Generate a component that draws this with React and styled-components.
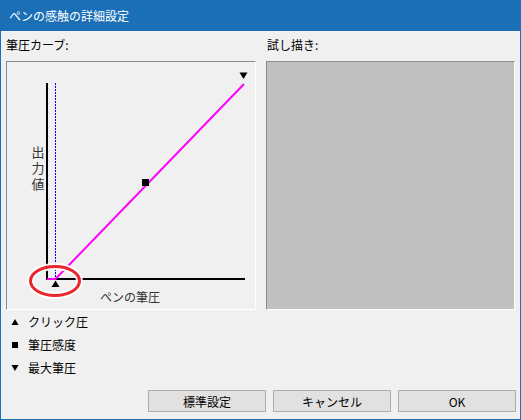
import React from "react";
import styled, { createGlobalStyle } from "styled-components";

const GlobalStyle = createGlobalStyle`
  html, body {
    margin: 0;
    padding: 0;
    background: #f0f0f0;
  }
  * {
    box-sizing: border-box;
  }
`;

const FONT = `"Noto Sans CJK JP", "Noto Sans", sans-serif`;

const Window = styled.div`
  width: 521px;
  height: 420px;
  display: flex;
  flex-direction: column;
  background: #f0f0f0;
  border: 1px solid #1a6fb7;
  border-top: none;
  font-family: ${FONT};
  font-size: 12px;
  color: #000;
`;

const TitleBar = styled.div`
  height: 31px;
  margin: 0 -1px;
  padding-left: 9px;
  display: flex;
  align-items: center;
  background: #1a6fb7;
  color: #fff;
  font-size: 12px;
  padding-bottom: 1px;
`;

const Body = styled.div`
  flex: 1;
  display: flex;
  flex-direction: column;
  padding: 6px 4px 0 5px;
`;

const Columns = styled.div`
  display: grid;
  grid-template-columns: 250px 249px;
  column-gap: 10px;
`;

const Column = styled.div`
  display: flex;
  flex-direction: column;
`;

const Label = styled.div`
  height: 16px;
  line-height: 16px;
  margin-bottom: 8px;
  padding-left: ${(p) => p.$indent || 0}px;
`;

const Panel = styled.div`
  height: 249px;
  border-top: 1px solid #8c8c8c;
  border-left: 1px solid #8c8c8c;
  border-right: 1px solid #ffffff;
  border-bottom: 1px solid #ffffff;
  background: ${(p) => (p.$preview ? "#c0c0c0" : "#f0f0f0")};
`;

const Chart = styled.svg`
  display: block;
  width: 248px;
  height: 247px;
  font-family: ${FONT};
`;

const VerticalText = styled.text`
  writing-mode: vertical-rl;
  letter-spacing: 3px;
`;

const Legend = styled.ul`
  list-style: none;
  margin: 0;
  padding: 0 0 0 5px;
`;

const LegendItem = styled.li`
  height: 23px;
  display: flex;
  align-items: center;
  gap: 9px;
`;

const Marker = styled.svg`
  width: 8px;
  height: 8px;
  flex: none;
`;

const ButtonRow = styled.div`
  margin-top: 11px;
  display: flex;
  justify-content: flex-end;
  gap: 7px;
`;

const Button = styled.button`
  width: 118px;
  height: 22px;
  padding: 0;
  border: 1px solid #adadad;
  background: #e1e1e1;
  font-family: ${FONT};
  font-size: 12px;
  color: #000;
`;

const markers = {
  up: <polygon points="4,1 0.5,7 7.5,7" fill="#000" />,
  square: <rect x="1" y="1" width="6" height="6" fill="#000" />,
  down: <polygon points="0.5,1 7.5,1 4,7" fill="#000" />,
};

const legend = [
  { kind: "up", text: "クリック圧" },
  { kind: "square", text: "筆圧感度" },
  { kind: "down", text: "最大筆圧" },
];

function CurveChart() {
  return (
    <Chart viewBox="0 0 248 247">
      {/* axes */}
      <g shapeRendering="crispEdges">
        <line x1="40" y1="21" x2="40" y2="218" stroke="#000" strokeWidth="2" />
        <line x1="39" y1="217" x2="238" y2="217" stroke="#000" strokeWidth="2" />
        {/* click pressure guide */}
        <line
          x1="48.5"
          y1="21"
          x2="48.5"
          y2="216"
          stroke="#0000ff"
          strokeWidth="1"
          strokeDasharray="2 1"
        />
      </g>
      {/* curve */}
      <polyline
        points="40,217 48.5,217 237,22"
        fill="none"
        stroke="#ff00ff"
        strokeWidth="2"
      />
      <rect x="135" y="117" width="7" height="7" fill="#000" />
      <polygon points="48.5,218.5 44.5,225 52.5,225" fill="#000" />
      <polygon points="232.5,10.5 240.5,10.5 236.5,17" fill="#000" />
      {/* highlight */}
      <ellipse cx="48" cy="219" rx="24.5" ry="14.5" fill="none" stroke="#fff" strokeWidth="7" opacity="0.9" />
      <ellipse cx="48" cy="219" rx="24.5" ry="14.5" fill="none" stroke="#e8262b" strokeWidth="3" />
      {/* labels */}
      <VerticalText x="31" y="84" fontSize="13" fill="#333">
        出力値
      </VerticalText>
      <text x="93" y="240" fontSize="12" fill="#333">
        ペンの筆圧
      </text>
    </Chart>
  );
}

export default function App() {
  return (
    <>
      <GlobalStyle />
      <Window>
        <TitleBar>ペンの感触の詳細設定</TitleBar>
        <Body>
          <Columns>
            <Column>
              <Label>筆圧カーブ:</Label>
              <Panel>
                <CurveChart />
              </Panel>
            </Column>
            <Column>
              <Label $indent={1}>試し描き:</Label>
              <Panel $preview />
            </Column>
          </Columns>
          <Legend>
            {legend.map((item) => (
              <LegendItem key={item.text}>
                <Marker viewBox="0 0 8 8">{markers[item.kind]}</Marker>
                {item.text}
              </LegendItem>
            ))}
          </Legend>
          <ButtonRow>
            <Button>標準設定</Button>
            <Button>キャンセル</Button>
            <Button>OK</Button>
          </ButtonRow>
        </Body>
      </Window>
    </>
  );
}
